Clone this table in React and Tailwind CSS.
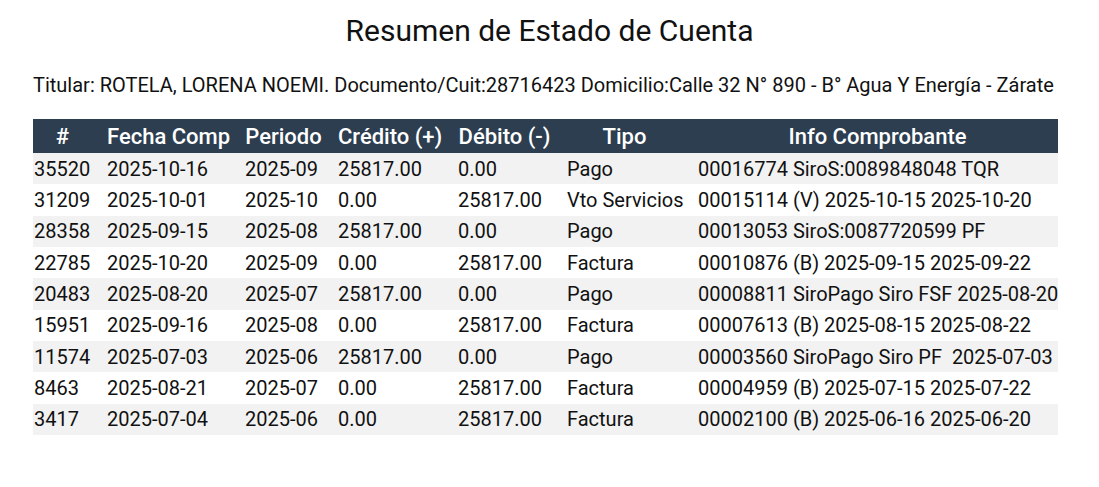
const rows = [
  ["35520", "2025-10-16", "2025-09", "25817.00", "0.00", "Pago", "00016774 SiroS:0089848048 TQR"],
  ["31209", "2025-10-01", "2025-10", "0.00", "25817.00", "Vto Servicios", "00015114 (V) 2025-10-15 2025-10-20"],
  ["28358", "2025-09-15", "2025-08", "25817.00", "0.00", "Pago", "00013053 SiroS:0087720599 PF"],
  ["22785", "2025-10-20", "2025-09", "0.00", "25817.00", "Factura", "00010876 (B) 2025-09-15 2025-09-22"],
  ["20483", "2025-08-20", "2025-07", "25817.00", "0.00", "Pago", "00008811 SiroPago Siro FSF 2025-08-20"],
  ["15951", "2025-09-16", "2025-08", "0.00", "25817.00", "Factura", "00007613 (B) 2025-08-15 2025-08-22"],
  ["11574", "2025-07-03", "2025-06", "25817.00", "0.00", "Pago", "00003560 SiroPago Siro PF\u00a0 2025-07-03"],
  ["8463", "2025-08-21", "2025-07", "0.00", "25817.00", "Factura", "00004959 (B) 2025-07-15 2025-07-22"],
  ["3417", "2025-07-04", "2025-06", "0.00", "25817.00", "Factura", "00002100 (B) 2025-06-16 2025-06-20"],
];

// ancho de cada columna (incluye padding)
const headers = [
  { label: "#", w: "w-[73px]" },
  { label: "Fecha Comp", w: "w-[138px]" },
  { label: "Periodo", w: "w-[93px]" },
  { label: "Crédito (+)", w: "w-[120px]" },
  { label: "Débito (-)", w: "w-[109px]" },
  { label: "Tipo", w: "w-[131px]" },
  { label: "Info Comprobante", w: "w-[361px]" },
];

export default function App() {
  return (
    <div className="min-h-[487px] bg-white text-[#111] font-['Roboto',sans-serif]">
      <div className="pl-[33px] pt-[13px]">
        {/* Titulo */}
        <h1 className="text-center text-[30px] leading-[36px] pr-[33px]">
          Resumen de Estado de Cuenta
        </h1>

        {/* Datos del titular */}
        <p className="mt-[24px] text-[20px] leading-[24px]">
          Titular: ROTELA, LORENA NOEMI. Documento/Cuit:28716423 Domicilio:Calle 32 N° 890 - B° Agua Y Energía - Zárate
        </p>

        {/* Movimientos */}
        <table className="mt-[22px] w-[1025px] table-fixed border-collapse text-[20px]">
          <thead>
            <tr className="bg-[#2c3e50] text-white">
              {headers.map((h) => (
                <th
                  key={h.label}
                  className={`${h.w} pl-[1px] pr-[15px] last:pr-[1px] h-[34px] text-[22px] font-medium text-center whitespace-nowrap`}
                >
                  {h.label}
                </th>
              ))}
            </tr>
          </thead>
          <tbody>
            {rows.map((r, i) => (
              <tr key={r[0]} className={i % 2 === 0 ? "bg-[#f2f2f2]" : "bg-white"}>
                {r.map((c, j) => (
                  <td key={j} className="pl-[1px] pr-[15px] last:pr-[1px] h-[31.33px] text-left whitespace-nowrap">
                    {c}
                  </td>
                ))}
              </tr>
            ))}
          </tbody>
        </table>
      </div>
    </div>
  );
}
